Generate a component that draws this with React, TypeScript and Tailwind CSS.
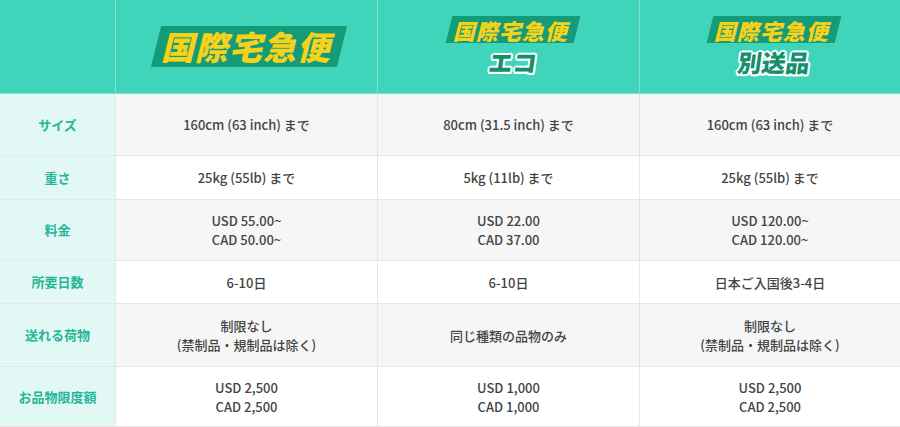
const font = "font-['Noto_Sans_CJK_JP','Noto_Sans',sans-serif]";

const rows = [
  { label: 'サイズ', h: 'h-[62px]', cells: [['160cm (63 inch) まで'], ['80cm (31.5 inch) まで'], ['160cm (63 inch) まで']] },
  { label: '重さ', h: 'h-[44px]', cells: [['25kg (55lb) まで'], ['5kg (11lb) まで'], ['25kg (55lb) まで']] },
  { label: '料金', h: 'h-[61px]', cells: [['USD 55.00~', 'CAD 50.00~'], ['USD 22.00', 'CAD 37.00'], ['USD 120.00~', 'CAD 120.00~']] },
  { label: '所要日数', h: 'h-[43px]', cells: [['6-10日'], ['6-10日'], ['日本ご入国後3-4日']] },
  { label: '送れる荷物', h: 'h-[63px]', cells: [['制限なし', '(禁制品・規制品は除く)'], ['同じ種類の品物のみ'], ['制限なし', '(禁制品・規制品は除く)']] },
  { label: 'お品物限度額', h: 'h-[60px]', cells: [['USD 2,500', 'CAD 2,500'], ['USD 1,000', 'CAD 1,000'], ['USD 2,500', 'CAD 2,500']] },
];

const outline =
  '[text-shadow:2px_0_0_#fff,-2px_0_0_#fff,0_2px_0_#fff,0_-2px_0_#fff,1.5px_1.5px_0_#fff,-1.5px_-1.5px_0_#fff,1.5px_-1.5px_0_#fff,-1.5px_1.5px_0_#fff]';

function Badge({ big }: { big?: boolean }) {
  return (
    <div
      className={`flex items-center justify-center bg-[#149b78] -skew-x-[14deg] ${
        big ? 'w-[186px] h-[41px]' : 'w-[128px] h-[27px]'
      }`}
    >
      <span
        className={`font-black text-[#f6d21a] tracking-[1px] leading-none ${
          big ? 'text-[33px]' : 'text-[22px]'
        }`}
      >
        国際宅急便
      </span>
    </div>
  );
}

function Sub({ text }: { text: string }) {
  return (
    <span className={`mt-[7px] font-black -skew-x-[8deg] inline-block text-[24px] leading-none text-[#14906c] ${outline}`}>
      {text}
    </span>
  );
}

export default function App() {
  return (
    <div className={`w-[900px] h-[427px] bg-white overflow-hidden ${font}`}>
      <div className="grid grid-cols-[116px_262px_262px_260px]">
        {/* header */}
        <div className="h-[94px] bg-[#3fd5ba] border-r border-b border-[#7fe3d0]" />
        <div className="h-[94px] bg-[#3fd5ba] border-r border-b border-[#7fe3d0] flex items-center justify-center pl-[4px]">
          <Badge big />
        </div>
        <div className="h-[94px] bg-[#3fd5ba] border-r border-b border-[#7fe3d0] flex flex-col items-center justify-start pt-[16px] pl-[8px]">
          <Badge />
          <Sub text="エコ" />
        </div>
        <div className="h-[94px] bg-[#3fd5ba] border-b border-[#7fe3d0] flex flex-col items-center justify-start pt-[16px] pl-[8px]">
          <Badge />
          <Sub text="別送品" />
        </div>

        {rows.map((r, i) => {
          const bg = i % 2 === 0 ? 'bg-[#f6f6f6]' : 'bg-white';
          return [
            <div
              key={r.label}
              className={`${r.h} bg-[#e2f8f4] border-r border-b border-[#e6e6e6] flex items-center justify-center text-[13px] font-bold text-[#26b697]`}
            >
              {r.label}
            </div>,
            ...r.cells.map((c, j) => (
              <div
                key={r.label + j}
                className={`${r.h} ${bg} ${j < 2 ? 'border-r' : ''} border-b border-[#e6e6e6] flex flex-col items-center justify-center text-[13px] font-medium leading-[19px] text-[#444]`}
              >
                {c.map((line) => (
                  <span key={line}>{line}</span>
                ))}
              </div>
            )),
          ];
        })}
      </div>
    </div>
  );
}
